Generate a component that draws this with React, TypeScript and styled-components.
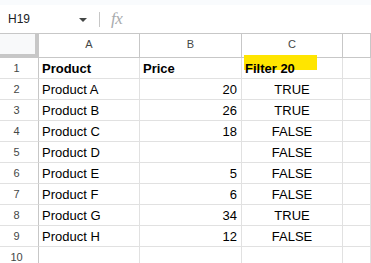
import React from 'react';
import styled, { createGlobalStyle } from 'styled-components';

const GlobalStyle = createGlobalStyle`
  body {
    margin: 0;
    background: #ffffff;
    font-family: 'Liberation Sans', Arial, sans-serif;
  }
`;

const gridLine = '#e1e1e1';
const headerLine = '#c7c7c7';

type Align = 'left' | 'right' | 'center';

interface Row {
  product: string;
  price?: number;
  filter: boolean;
}

const rows: Row[] = [
  { product: 'Product A', price: 20, filter: true },
  { product: 'Product B', price: 26, filter: true },
  { product: 'Product C', price: 18, filter: false },
  { product: 'Product D', filter: false },
  { product: 'Product E', price: 5, filter: false },
  { product: 'Product F', price: 6, filter: false },
  { product: 'Product G', price: 34, filter: true },
  { product: 'Product H', price: 12, filter: false },
];

const Page = styled.div`
  width: 371px;
  height: 263px;
  overflow: hidden;
  display: flex;
  flex-direction: column;
`;

const TopStrip = styled.div`
  flex-shrink: 0;
  height: 5px;
  background: #f9fbfd;
`;

const FormulaBar = styled.div`
  flex-shrink: 0;
  height: 28px;
  display: flex;
  align-items: center;
  border-bottom: 1px solid ${headerLine};
`;

const NameBox = styled.div`
  width: 99px;
  box-sizing: border-box;
  padding: 0 12px 0 8px;
  display: flex;
  align-items: center;
  justify-content: space-between;
  font-size: 12px;
  color: #202124;
`;

const Caret = styled.span`
  width: 0;
  height: 0;
  border-left: 4px solid transparent;
  border-right: 4px solid transparent;
  border-top: 4px solid #444746;
  margin-top: 1px;
`;

const Divider = styled.div`
  width: 1px;
  height: 15px;
  background: ${headerLine};
`;

const FxLabel = styled.span`
  margin-left: 11px;
  font-family: 'Liberation Serif', 'Times New Roman', serif;
  font-style: italic;
  font-size: 17px;
  color: #a8abae;
  letter-spacing: -0.5px;
`;

const Sheet = styled.div`
  flex-shrink: 0;
  display: grid;
  grid-template-columns: 39px 101px 102px 101px 1fr;
  grid-auto-rows: 21px;
  grid-template-rows: 24px;
`;

const Corner = styled.div`
  box-sizing: border-box;
  background: #f8f9fa;
  border-right: 4px solid ${headerLine};
  border-bottom: 4px solid ${headerLine};
`;

const ColHeader = styled.div`
  box-sizing: border-box;
  display: flex;
  align-items: center;
  justify-content: center;
  padding-bottom: 4px;
  border-right: 1px solid ${headerLine};
  border-bottom: 1px solid ${headerLine};
  font-size: 11px;
  color: #444746;
`;

const RowHeader = styled.div`
  box-sizing: border-box;
  display: flex;
  align-items: center;
  justify-content: center;
  padding-right: 5px;
  border-right: 1px solid ${headerLine};
  border-bottom: 1px solid ${gridLine};
  font-size: 11px;
  color: #444746;
`;

const Cell = styled.div<{ $align?: Align; $bold?: boolean }>`
  position: relative;
  box-sizing: border-box;
  display: flex;
  align-items: flex-end;
  justify-content: ${p => (p.$align === 'right' ? 'flex-end' : p.$align === 'center' ? 'center' : 'flex-start')};
  padding: 0 4px 2px ${p => (p.$align === 'left' || !p.$align ? '3px' : '4px')};
  border-right: 1px solid ${gridLine};
  border-bottom: 1px solid ${gridLine};
  font-size: 13px;
  line-height: 15px;
  font-weight: ${p => (p.$bold ? 700 : 400)};
  color: #000000;
  white-space: nowrap;
`;

const CellText = styled.span`
  position: relative;
  z-index: 1;
`;

const Highlight = styled.span`
  position: absolute;
  left: 2px;
  top: -3px;
  width: 73px;
  height: 15px;
  background: #ffe500;
`;

export default function App() {
  return (
    <Page>
      <GlobalStyle />
      <TopStrip />
      <FormulaBar>
        <NameBox>
          <span>H19</span>
          <Caret />
        </NameBox>
        <Divider />
        <FxLabel>fx</FxLabel>
      </FormulaBar>
      <Sheet>
        <Corner />
        {['A', 'B', 'C', ''].map((c, i) => (
          <ColHeader key={i}>{c}</ColHeader>
        ))}

        <RowHeader>1</RowHeader>
        <Cell $bold>Product</Cell>
        <Cell $bold>Price</Cell>
        <Cell $bold>
          <Highlight />
          <CellText>Filter 20</CellText>
        </Cell>
        <Cell />

        {rows.map((r, i) => (
          <React.Fragment key={r.product}>
            <RowHeader>{i + 2}</RowHeader>
            <Cell>{r.product}</Cell>
            <Cell $align="right">{r.price ?? ''}</Cell>
            <Cell $align="center">{r.filter ? 'TRUE' : 'FALSE'}</Cell>
            <Cell />
          </React.Fragment>
        ))}

        <RowHeader>10</RowHeader>
        <Cell />
        <Cell />
        <Cell />
        <Cell />
      </Sheet>
    </Page>
  );
}
